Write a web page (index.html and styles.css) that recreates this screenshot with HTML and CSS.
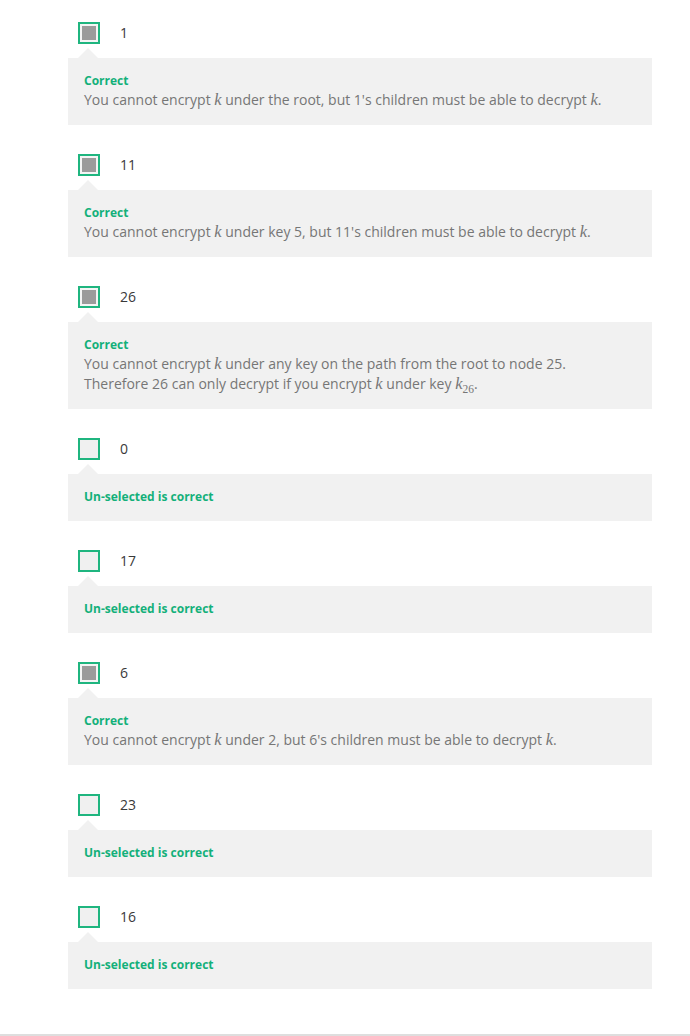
FILE: index.html
```html
<!DOCTYPE html>
<html>
<head>
<meta charset="utf-8">
<link rel="stylesheet" href="styles.css">
</head>
<body>
<div class="page">
  <div class="options">
    <div class="option">
      <div class="row"><span class="box checked"></span><span class="label">1</span></div>
      <div class="feedback">
        <div class="title">Correct</div>
        <div class="text">You cannot encrypt <span class="m">k</span> under the root, but 1's children must be able to decrypt <span class="m">k</span>.</div>
      </div>
    </div>
    <div class="option">
      <div class="row"><span class="box checked"></span><span class="label">11</span></div>
      <div class="feedback">
        <div class="title">Correct</div>
        <div class="text">You cannot encrypt <span class="m">k</span> under key 5, but 11's children must be able to decrypt <span class="m">k</span>.</div>
      </div>
    </div>
    <div class="option">
      <div class="row"><span class="box checked"></span><span class="label">26</span></div>
      <div class="feedback">
        <div class="title">Correct</div>
        <div class="text">You cannot encrypt <span class="m">k</span> under any key on the path from the root to node 25.<br>Therefore 26 can only decrypt if you encrypt <span class="m">k</span> under key <span class="m">k</span><sub class="sub">26</sub>.</div>
      </div>
    </div>
    <div class="option">
      <div class="row"><span class="box"></span><span class="label">0</span></div>
      <div class="feedback">
        <div class="title">Un-selected is correct</div>
      </div>
    </div>
    <div class="option">
      <div class="row"><span class="box"></span><span class="label">17</span></div>
      <div class="feedback">
        <div class="title">Un-selected is correct</div>
      </div>
    </div>
    <div class="option">
      <div class="row"><span class="box checked"></span><span class="label">6</span></div>
      <div class="feedback">
        <div class="title">Correct</div>
        <div class="text">You cannot encrypt <span class="m">k</span> under 2, but 6's children must be able to decrypt <span class="m">k</span>.</div>
      </div>
    </div>
    <div class="option">
      <div class="row"><span class="box"></span><span class="label">23</span></div>
      <div class="feedback">
        <div class="title">Un-selected is correct</div>
      </div>
    </div>
    <div class="option">
      <div class="row"><span class="box"></span><span class="label">16</span></div>
      <div class="feedback">
        <div class="title">Un-selected is correct</div>
      </div>
    </div>
  </div>
  <div class="bottom-line"></div>
</div>
</body>
</html>
```

FILE: styles.css
```css
html, body {
  margin: 0;
  padding: 0;
  background: #fff;
}
body {
  font-family: "Open Sans", "Liberation Sans", sans-serif;
  color: #333;
}
.page {
  width: 690px;
  height: 1036px;
  display: flex;
  flex-direction: column;
  justify-content: space-between;
}
.options {
  padding: 22px 0 0 68px;
  width: 584px;
  display: flex;
  flex-direction: column;
  gap: 29px;
}
.row {
  display: flex;
  align-items: center;
  height: 22px;
  margin-left: 10px;
}
.box {
  box-sizing: border-box;
  width: 22px;
  height: 22px;
  border: 2px solid #1fb57f;
  background: #f0f0f0;
}
.box.checked {
  background: #9b9b9b;
  box-shadow: inset 0 0 0 2px #f4f4f4;
}
.label {
  margin-left: 20px;
  font-size: 14px;
  line-height: 22px;
  color: #3a3a3a;
}
.feedback {
  position: relative;
  margin-top: 14px;
  background: #f1f1f1;
  padding: 14px 16px 15px;
}
.feedback::before {
  content: "";
  position: absolute;
  left: 10px;
  top: -10px;
  border-left: 10px solid transparent;
  border-right: 10px solid transparent;
  border-bottom: 10px solid #f1f1f1;
}
.title {
  font-size: 12px;
  font-weight: 700;
  line-height: 18px;
  color: #13b07a;
}
.text {
  font-size: 14px;
  line-height: 20px;
  color: #767676;
}
.m {
  font-family: "Liberation Serif", "DejaVu Serif", serif;
  font-style: italic;
  font-size: 16.5px;
}
.sub {
  font-size: 11.5px;
  line-height: 0;
  vertical-align: -4px;
  font-family: "Liberation Serif", serif;
}
.bottom-line {
  height: 2px;
  background: #dedede;
}
```
